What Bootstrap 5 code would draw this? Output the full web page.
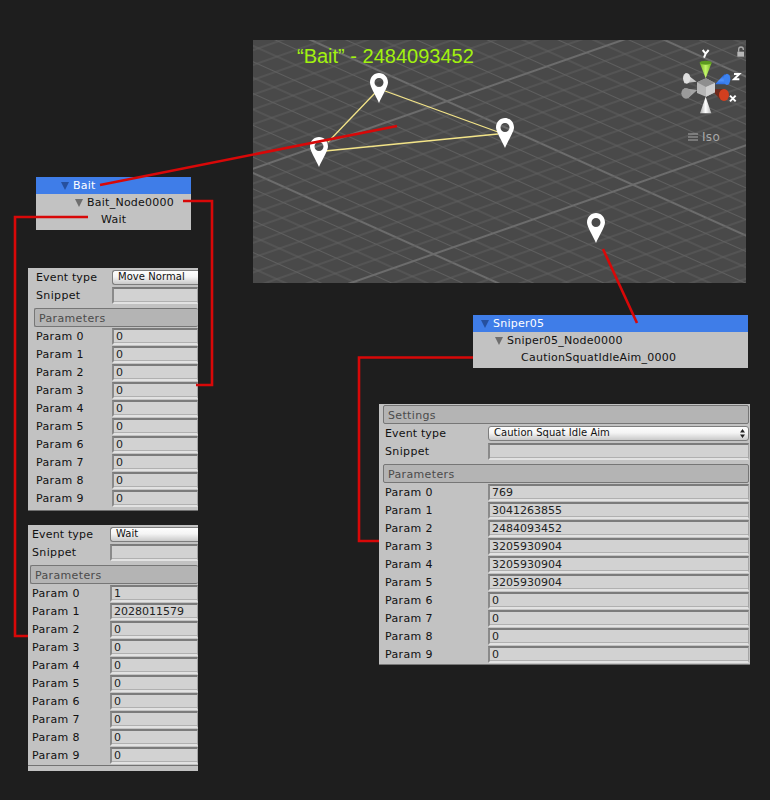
<!DOCTYPE html>
<html lang="en">
<head>
<meta charset="utf-8">
<title>Unity event nodes</title>
<link href="https://cdn.jsdelivr.net/npm/bootstrap@5.3.0/dist/css/bootstrap.min.css" rel="stylesheet">
<style>
html,body{margin:0;background:#1e1e1e}
.stage{position:relative;width:770px;height:800px;overflow:hidden;background:#1e1e1e;font-family:"DejaVu Sans",sans-serif;font-size:11px;line-height:1;color:#111}
.scene{position:absolute;left:253px;top:40px;width:493px;height:243px;background:#494949;overflow:hidden}
.scene svg{display:block}
.scene-title{position:absolute;left:44px;top:5px;font-family:"Liberation Sans",sans-serif;font-size:20px;line-height:23px;color:#a2f20e;white-space:nowrap}
.iso{position:absolute;left:435px;top:90px;color:#a8a8a8;font-size:12px;line-height:14px;letter-spacing:.3px}
.gizmo{position:absolute;left:387px;top:-5px}
.overlay{position:absolute;left:0;top:0;pointer-events:none;z-index:5}
.tree{position:absolute;background:#c2c2c2;padding-bottom:2px}
.tree-a{left:36px;top:177px;width:155px}
.tree-b{left:473px;top:315px;width:275px}
.tree-row{display:flex;align-items:center;height:17px;letter-spacing:.25px;white-space:nowrap}
.tree-row.sel{background:#3f7de8;color:#fff}
.tri{width:0;height:0;border-left:4.5px solid transparent;border-right:4.5px solid transparent;border-top:8px solid #6e6e6e;margin-right:4px}
.sel .tri{border-top-color:#26509f}
.tree-a .l0{padding-left:25px}.tree-a .l1{padding-left:39px}.tree-a .l2{padding-left:65px}
.tree-b .l0{padding-left:8px}.tree-b .l1{padding-left:22px}.tree-b .l2{padding-left:48px}
.insp{position:absolute;background:#c2c2c2;overflow:hidden}
.insp-a{left:28px;top:268px;width:170px;height:243px;border-bottom:1px solid #6f6f6f}
.insp-b{left:28px;top:525px;width:170px;height:246px}
.insp-c{left:379px;top:404px;width:371px;height:261px;padding-top:1px;border-bottom:1px solid #777}
.row-line{display:flex;align-items:center;height:18px;letter-spacing:.35px}
.row-name{flex:none;white-space:nowrap}
.row-name.evt{letter-spacing:.15px}
.insp-a .row-line{padding-left:8px}.insp-a .row-name{width:76px}
.insp-b .row-line{padding-left:4px}.insp-b .row-name{width:78px}
.insp-c .row-line{padding-left:6px;padding-right:1px}.insp-c .row-name{width:103px}
.val{flex:1 1 auto;height:17px;margin-top:1px;background:#d2d2d2;border-top:2px solid #7b7b7b;border-left:2px solid #8a8a8a;border-right:1px solid #a5a5a5;border-bottom:2px solid #e2e2e2;box-shadow:inset 0 -1px 0 #b0b0b0;padding-left:2px;display:flex;align-items:center;color:#222;letter-spacing:0;white-space:nowrap}
.pick{flex:1 1 auto;height:15px;background:linear-gradient(#fdfdfd,#f4f4f4 45%,#c9c9c9);border:1px solid #7d7d7d;border-radius:3px;padding:0 3px 0 5px;display:flex;align-items:center;justify-content:space-between;font-size:10px;letter-spacing:.05px;white-space:nowrap;overflow:hidden}
.insp-a .pick,.insp-b .pick{border-right:0;border-radius:3px 0 0 3px}
.sect{height:19px;margin-top:4px;background:#b4b4b4;border:1px solid #767676;border-radius:2px;display:flex;align-items:center;padding:1px 0 0 4px;color:#4b4b4b;letter-spacing:.35px}
.insp-a .sect{margin-left:6px;border-right:0}
.insp-b .sect{margin-left:2px;border-right:0}
.insp-c .sect{margin-left:4px;margin-right:1px}
.insp-c .sect.first{margin-top:0}
.rule{height:1px;background:#727272;margin-top:1px}
</style>
</head>
<body>
<div class="stage">

  <div class="scene">
    <svg width="493" height="243" viewBox="0 0 493 243" aria-hidden="true">
      <defs>
        <pattern id="gridA" width="1000" height="145" patternUnits="userSpaceOnUse" patternTransform="translate(0 133) rotate(24.2)">
          <path d="M0 14.500H1000M0 29H1000M0 43.500H1000M0 58H1000M0 72.500H1000M0 87H1000M0 101.500H1000M0 116H1000M0 130.500H1000" stroke="#5f5f5f" stroke-width="1.100"/>
          <path d="M0 0H1000M0 145H1000" stroke="#6c6c6c" stroke-width="2"/>
        </pattern>
        <pattern id="gridB" width="1000" height="140" patternUnits="userSpaceOnUse" patternTransform="translate(178 215) rotate(-19.2)">
          <path d="M0 14H1000M0 28H1000M0 42H1000M0 56H1000M0 70H1000M0 84H1000M0 98H1000M0 112H1000M0 126H1000" stroke="#5f5f5f" stroke-width="1.100"/>
          <path d="M0 0H1000M0 140H1000" stroke="#6c6c6c" stroke-width="2"/>
        </pattern>
      </defs>
      <rect width="493" height="243" fill="url(#gridA)"/>
      <rect width="493" height="243" fill="url(#gridB)"/>
    </svg>
    <div class="scene-title">“Bait” - 2484093452</div>
    <div class="iso d-flex align-items-center gap-1">
      <svg width="10" height="8" viewBox="0 0 10 8" aria-hidden="true"><path d="M0 1h10M0 4h10M0 7h10" stroke="#a8a8a8" stroke-width="1"/></svg>
      <span>Iso</span>
    </div>
    <svg class="gizmo" width="110" height="120" viewBox="0 0 330 360" aria-hidden="true">
      <defs>
        <linearGradient id="gGreen" x1="0" x2="1" y1="0" y2="0"><stop offset="0" stop-color="#6fb31f"/><stop offset=".5" stop-color="#c4f56a"/><stop offset="1" stop-color="#6fb31f"/></linearGradient>
        <linearGradient id="gWhite" x1="0" x2="1" y1="0" y2="0"><stop offset="0" stop-color="#a8a8a8"/><stop offset=".5" stop-color="#fff"/><stop offset="1" stop-color="#b8b8b8"/></linearGradient>
        <linearGradient id="gWhite2" x1="0" x2="0" y1="0" y2="1"><stop offset="0" stop-color="#f2f2f2"/><stop offset="1" stop-color="#b4b4b4"/></linearGradient>
        <linearGradient id="gBlue" x1="0" x2="0" y1="0" y2="1"><stop offset="0" stop-color="#1f5bd0"/><stop offset=".6" stop-color="#4f93ff"/><stop offset="1" stop-color="#2a6be0"/></linearGradient>
      </defs>
      <path d="M296 50v-7a7 7 0 0 1 14 0v2" fill="none" stroke="#a9a9a9" stroke-width="4"/>
      <rect x="292" y="50" width="20" height="15" fill="#b8b8b8"/>
      <path d="M197 130L179 83H215Z" fill="url(#gGreen)"/>
      <ellipse cx="197" cy="83" rx="18" ry="6" fill="#5c9a20"/>
      <path d="M170 140L136 115L132 145Z" fill="url(#gWhite2)"/>
      <ellipse cx="140" cy="130" rx="11" ry="16" fill="#dedede"/>
      <path d="M172 165L132 160L144 190Z" fill="#a4a4a4"/>
      <ellipse cx="138" cy="175" rx="14" ry="16" fill="#9a9a9a"/>
      <path d="M197 185L180 235H214Z" fill="url(#gWhite)"/>
      <path d="M225 148L254 117L268 148Z" fill="url(#gBlue)"/>
      <ellipse cx="261" cy="133" rx="10" ry="17" fill="#3c82f0"/>
      <path d="M213 163L250 162L242 195Z" fill="#6e2a1c"/>
      <ellipse cx="252" cy="180" rx="15" ry="18" fill="#d23f1f"/>
      <path d="M171 142L198 130L225 144L225 172L198 185L171 174Z" fill="#b6b6b6"/>
      <path d="M171 142L198 130L225 144L198 156Z" fill="#8e8e8e"/>
      <path d="M198 156L225 144L225 172L198 185Z" fill="#cfcfcf"/>
      <path d="M188 45l9 11 9-11M197 56l-5 12" fill="none" stroke="#fff" stroke-width="6"/>
      <path d="M282 117h16l-16 16h16" fill="none" stroke="#fff" stroke-width="6"/>
      <path d="M270 182l17 17M287 182l-17 17" fill="none" stroke="#fff" stroke-width="6"/>
    </svg>
  </div>

  <div class="tree tree-a">
    <div class="tree-row sel l0"><span class="tri"></span>Bait</div>
    <div class="tree-row l1"><span class="tri"></span>Bait_Node0000</div>
    <div class="tree-row l2">Wait</div>
  </div>

  <div class="tree tree-b">
    <div class="tree-row sel l0"><span class="tri"></span>Sniper05</div>
    <div class="tree-row l1"><span class="tri"></span>Sniper05_Node0000</div>
    <div class="tree-row l2">CautionSquatIdleAim_0000</div>
  </div>

  <div class="insp insp-a">
    <div class="row-line"><span class="row-name evt">Event type</span><div class="pick"><span>Move Normal</span></div></div>
    <div class="row-line"><span class="row-name">Snippet</span><div class="val"></div></div>
    <div class="sect">Parameters</div>
    <div class="row-line"><span class="row-name">Param 0</span><div class="val">0</div></div>
    <div class="row-line"><span class="row-name">Param 1</span><div class="val">0</div></div>
    <div class="row-line"><span class="row-name">Param 2</span><div class="val">0</div></div>
    <div class="row-line"><span class="row-name">Param 3</span><div class="val">0</div></div>
    <div class="row-line"><span class="row-name">Param 4</span><div class="val">0</div></div>
    <div class="row-line"><span class="row-name">Param 5</span><div class="val">0</div></div>
    <div class="row-line"><span class="row-name">Param 6</span><div class="val">0</div></div>
    <div class="row-line"><span class="row-name">Param 7</span><div class="val">0</div></div>
    <div class="row-line"><span class="row-name">Param 8</span><div class="val">0</div></div>
    <div class="row-line"><span class="row-name">Param 9</span><div class="val">0</div></div>
  </div>

  <div class="insp insp-b">
    <div class="row-line"><span class="row-name evt">Event type</span><div class="pick"><span>Wait</span></div></div>
    <div class="row-line"><span class="row-name">Snippet</span><div class="val"></div></div>
    <div class="sect">Parameters</div>
    <div class="row-line"><span class="row-name">Param 0</span><div class="val">1</div></div>
    <div class="row-line"><span class="row-name">Param 1</span><div class="val">2028011579</div></div>
    <div class="row-line"><span class="row-name">Param 2</span><div class="val">0</div></div>
    <div class="row-line"><span class="row-name">Param 3</span><div class="val">0</div></div>
    <div class="row-line"><span class="row-name">Param 4</span><div class="val">0</div></div>
    <div class="row-line"><span class="row-name">Param 5</span><div class="val">0</div></div>
    <div class="row-line"><span class="row-name">Param 6</span><div class="val">0</div></div>
    <div class="row-line"><span class="row-name">Param 7</span><div class="val">0</div></div>
    <div class="row-line"><span class="row-name">Param 8</span><div class="val">0</div></div>
    <div class="row-line"><span class="row-name">Param 9</span><div class="val">0</div></div>
    <div class="rule"></div>
  </div>

  <div class="insp insp-c">
    <div class="sect first">Settings</div>
    <div class="row-line"><span class="row-name evt">Event type</span><div class="pick"><span>Caution Squat Idle Aim</span>
      <svg width="5" height="9" viewBox="0 0 5 9" aria-hidden="true"><path d="M2.500 0L5 3.500H0ZM2.500 9L0 5.500H5Z" fill="#222"/></svg></div></div>
    <div class="row-line"><span class="row-name">Snippet</span><div class="val"></div></div>
    <div class="sect">Parameters</div>
    <div class="row-line"><span class="row-name">Param 0</span><div class="val">769</div></div>
    <div class="row-line"><span class="row-name">Param 1</span><div class="val">3041263855</div></div>
    <div class="row-line"><span class="row-name">Param 2</span><div class="val">2484093452</div></div>
    <div class="row-line"><span class="row-name">Param 3</span><div class="val">3205930904</div></div>
    <div class="row-line"><span class="row-name">Param 4</span><div class="val">3205930904</div></div>
    <div class="row-line"><span class="row-name">Param 5</span><div class="val">3205930904</div></div>
    <div class="row-line"><span class="row-name">Param 6</span><div class="val">0</div></div>
    <div class="row-line"><span class="row-name">Param 7</span><div class="val">0</div></div>
    <div class="row-line"><span class="row-name">Param 8</span><div class="val">0</div></div>
    <div class="row-line"><span class="row-name">Param 9</span><div class="val">0</div></div>
  </div>

  <svg class="overlay" width="770" height="800" viewBox="0 0 770 800" aria-hidden="true">
    <defs>
      <path id="pin" fill="#fff" fill-rule="evenodd" d="M9 0C14 0 18 4 18 9.500C18 13.500 12 23 9 30C6 23 0 13.500 0 9.500C0 4 4 0 9 0ZM9 5A4.500 4.500 0 1 0 9 14A4.500 4.500 0 1 0 9 5Z"/>
    </defs>
    <g fill="none" stroke="#f3e488" stroke-width="1.300">
      <path d="M375 93L328 142"/>
      <path d="M385 91L498 132"/>
      <path d="M325 151L498 134"/>
    </g>
    <use href="#pin" x="370" y="73"/>
    <use href="#pin" x="496" y="118"/>
    <use href="#pin" x="310" y="137"/>
    <use href="#pin" x="587" y="213"/>
    <g fill="none" stroke="#d80808" stroke-width="2.600">
      <path d="M100 185L397 126"/>
      <path d="M183 201H212V385H196"/>
      <path d="M88 217H15V636H28"/>
      <path d="M603 249L637 323"/>
      <path d="M473 357.500H359V541H379"/>
    </g>
  </svg>
</div>
<script src="https://cdn.jsdelivr.net/npm/bootstrap@5.3.0/dist/js/bootstrap.bundle.min.js"></script>
</body>
</html>
